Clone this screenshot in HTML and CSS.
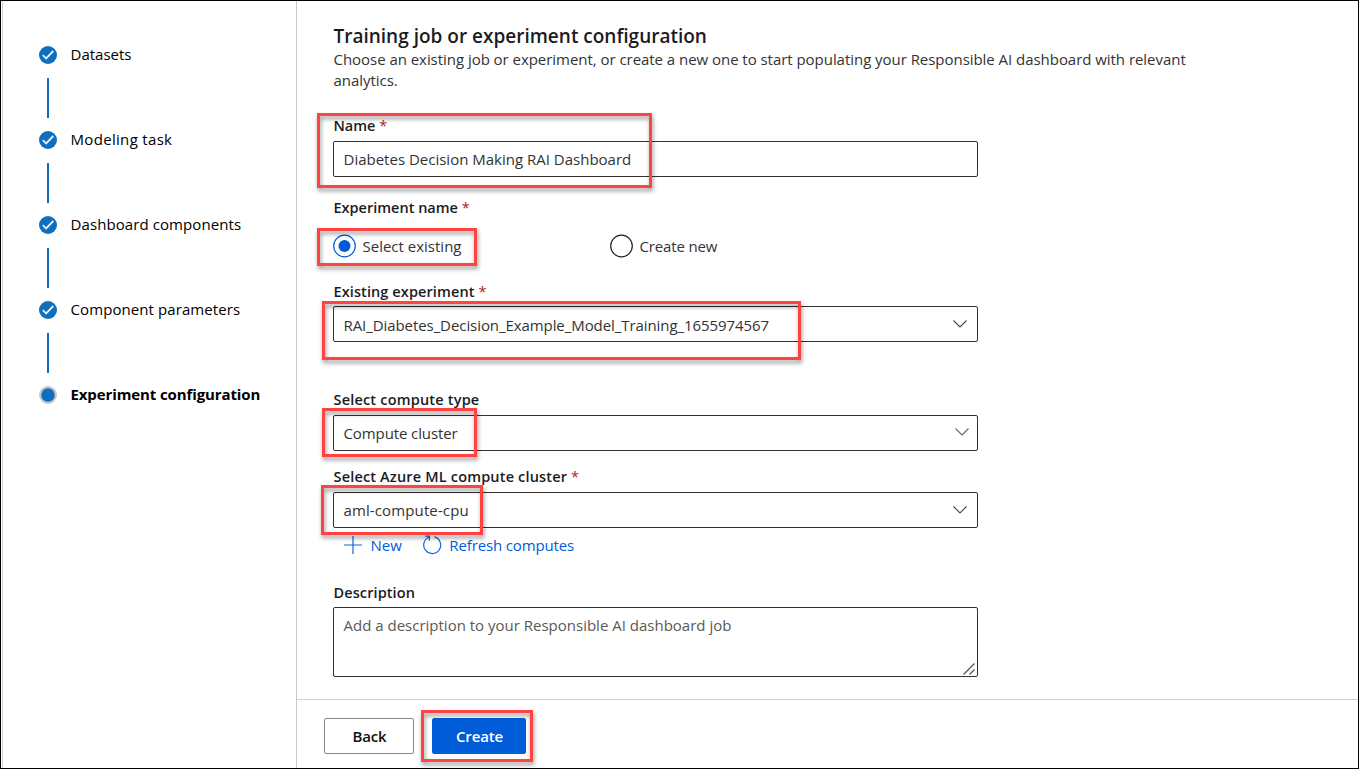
FILE: index.html
```html
<!DOCTYPE html>
<html lang="en">
<head>
<meta charset="utf-8">
<title>Training job or experiment configuration</title>
<link rel="stylesheet" href="styles.css">
</head>
<body>
<div class="window">
  <nav class="steps">
    <div class="step"><svg class="dot" viewBox="0 0 18 18"><circle cx="9" cy="9" r="9"/><path d="M3.800 9.200l3.300 3.200 7.200-7.400"/></svg><span>Datasets</span></div>
    <div class="step"><svg class="dot" viewBox="0 0 18 18"><circle cx="9" cy="9" r="9"/><path d="M3.800 9.200l3.300 3.200 7.200-7.400"/></svg><span class="s-model">Modeling task</span></div>
    <div class="step"><svg class="dot" viewBox="0 0 18 18"><circle cx="9" cy="9" r="9"/><path d="M3.800 9.200l3.300 3.200 7.200-7.400"/></svg><span class="s-dash">Dashboard components</span></div>
    <div class="step"><svg class="dot" viewBox="0 0 18 18"><circle cx="9" cy="9" r="9"/><path d="M3.800 9.200l3.300 3.200 7.200-7.400"/></svg><span class="s-dash">Component parameters</span></div>
    <div class="step current"><svg class="dot" viewBox="0 0 18 18"><circle class="ring" cx="9" cy="9" r="9"/><circle cx="9" cy="9" r="6.800"/></svg><span class="s-config">Experiment configuration</span></div>
  </nav>
  <main class="panel">
    <form class="form">
      <h1><span>Training job or experiment configuration</span></h1>
      <p class="intro"><span>Choose an existing job or experiment, or create a new one to start populating your Responsible AI dashboard with relevant</span><br><span>analytics.</span></p>

      <label class="label l-name"><span>Name</span> <i>*</i></label>
      <div class="field"><span>Diabetes Decision Making RAI Dashboard</span></div>

      <label class="label l-exp"><span>Experiment name</span> <i>*</i></label>
      <div class="radios">
        <div class="radio on"><svg viewBox="0 0 24 24"><circle cx="11.500" cy="12" r="10.800"/><circle class="fill" cx="11.500" cy="12" r="6"/></svg><span>Select existing</span></div>
        <div class="radio"><svg viewBox="0 0 24 24"><circle cx="11.500" cy="12" r="10.800"/></svg><span class="v-new">Create new</span></div>
      </div>

      <label class="label l-existing"><span>Existing experiment</span> <i>*</i></label>
      <div class="field"><span class="v-rai">RAI_Diabetes_Decision_Example_Model_Training_1655974567</span><svg class="chev" viewBox="0 0 14 8"><path d="M.5.5L7 7 13.500.5"/></svg></div>

      <label class="label l-type"><span>Select compute type</span></label>
      <div class="field native"><span class="v-type">Compute cluster</span><svg class="chev" viewBox="0 0 14 8"><path d="M.5.5L7 7 13.500.5"/></svg></div>

      <label class="label l-cluster"><span>Select Azure ML compute cluster</span> <i>*</i></label>
      <div class="field"><span class="v-aml">aml-compute-cpu</span><svg class="chev" viewBox="0 0 14 8"><path d="M.5.5L7 7 13.500.5"/></svg></div>

      <div class="actions">
        <svg class="plus" viewBox="0 0 18 18"><path d="M9 0v18M0 9h18"/></svg><span>New</span>
        <svg class="refresh" viewBox="0 0 20 20"><path d="M12.500 1.900A8.500 8.500 0 1 1 7 2.200M3 1.200H7.400V5.600"/></svg><span class="a-ref">Refresh computes</span>
      </div>

      <label class="label l-desc"><span>Description</span></label>
      <div class="area"><span>Add a description to your Responsible AI dashboard job</span><svg class="grip" viewBox="0 0 12 12"><path d="M.5 11.500L11.500.5M6.500 11.500l5-5"/></svg></div>
    </form>
    <footer class="footer">
      <div class="btn"><span>Back</span></div>
      <div class="btn primary"><span>Create</span></div>
    </footer>
  </main>
</div>
<div class="mark m-name"></div>
<div class="mark m-radio"></div>
<div class="mark m-existing"></div>
<div class="mark m-type"></div>
<div class="mark m-cluster"></div>
<div class="mark m-create"></div>
</body>
</html>
```
FILE: styles.css
```css
* { box-sizing: border-box; }
body {
  margin: 0;
  width: 1359px;
  height: 769px;
  overflow: hidden;
  position: relative;
  background: #fff;
  color: #1b1b1f;
  font: 15px/20px "Open Sans", "Noto Sans", sans-serif;
}
span { white-space: nowrap; }
svg { flex: none; display: block; }
.window {
  display: flex;
  width: 1359px;
  height: 769px;
  border: 1px solid #000;
}

/* Wizard steps */
.steps {
  flex: none;
  margin-left: 1px;
  width: 295px;
  border-left: 1px solid #d2d0ce;
  border-right: 1px solid #c8c8c8;
  padding: 45px 0 0 36px;
  color: #000;
}
.step {
  height: 85px;
  display: grid;
  grid-template-columns: 18px 1fr;
  grid-template-rows: 18px 1fr;
  column-gap: 13.5px;
  align-items: center;
}
.step span { margin-top: -3px; }
.step:not(.current)::after {
  content: "";
  width: 2px;
  height: 40px;
  background: #0f6cbd;
  justify-self: center;
  align-self: start;
  margin-top: 14px;
}
.dot { width: 18px; height: 18px; fill: #106ebe; }
.dot path { fill: none; stroke: #e4f1fc; stroke-width: 1.8; }
.dot .ring { fill: #c8c8c8; }
.current { font-weight: 700; }
.s-model { letter-spacing: .32px; }
.s-dash { letter-spacing: .09px; }
.s-config { letter-spacing: -.11px; }

/* Form */
.panel { flex: 1; display: flex; flex-direction: column; }
.form { height: 698px; flex: none; padding: 23px 0 0 36px; }
h1 { margin: 0; padding-left: .5px; font-size: 19px; line-height: 24px; font-weight: 600; }
.intro { margin: 1px 0 25px; padding-left: .5px; line-height: 21px; color: #333; height: 42px; letter-spacing: -.041px; }
.label { display: block; height: 20px; margin-bottom: 5px; padding-left: .5px; font-weight: 600; font-size: 14.5px; }
.label i { font-style: normal; font-weight: 400; color: #a4262c; }
.field {
  width: 645px;
  height: 36px;
  border: 1px solid #323130;
  border-radius: 2px;
  padding: 0 10px 0 9.5px;
  display: flex;
  align-items: center;
  justify-content: space-between;
  color: #333;
}
.chev { width: 14px; height: 8px; fill: none; stroke: #444; stroke-width: 1.1; }
.native .chev { margin: -2px -2px 0 0; stroke: #666; }
.v-rai { letter-spacing: -.075px; padding-top: 1px; }
.v-type { letter-spacing: -.1px; }
.v-aml { letter-spacing: .12px; }
.l-exp { margin-top: 21px; }
.radios { display: flex; height: 24px; margin-top: 16px; color: #333; }
.radio { width: 277px; display: flex; align-items: center; gap: 6px; }
.radio svg { width: 24px; height: 24px; margin-left: -.5px; fill: none; stroke: #222; stroke-width: 1.2; }
.radio.on svg { stroke: #015cda; }
.radio .fill { fill: #015cda; stroke: none; }
.v-new { letter-spacing: -.15px; }
.l-existing { margin-top: 24px; margin-bottom: 4px; letter-spacing: .1px; }
.l-type { margin-top: 48px; letter-spacing: .19px; }
.l-cluster { margin-top: 16px; letter-spacing: .17px; }
.actions { display: flex; align-items: center; height: 20px; margin-top: 7px; padding-left: 10.5px; color: #015cda; }
.actions svg { fill: none; stroke: #1567dc; stroke-width: 1.2; }
.a-ref { letter-spacing: -.14px; }
.plus { width: 18px; height: 18px; margin-right: 9px; }
.refresh { width: 20px; height: 20px; margin: 0 7.5px 0 20px; }
.l-desc { margin-top: 28px; margin-bottom: 4px; letter-spacing: .1px; }
.area {
  width: 645px;
  height: 70px;
  border: 1px solid #323130;
  border-radius: 2px;
  padding: 7px 2px 1px 9.5px;
  display: flex;
  justify-content: space-between;
  color: #5a5957;
}
.grip { width: 12px; height: 12px; align-self: flex-end; fill: none; stroke: #555; stroke-width: 1.3; }

/* Footer */
.footer { flex: 1; border-top: 1px solid #d2d0ce; padding: 18px 0 0 27px; display: flex; gap: 18px; }
.btn {
  width: 90px;
  height: 36px;
  border: 1px solid #8a8886;
  border-radius: 2px;
  display: flex;
  align-items: center;
  justify-content: center;
  font-weight: 600;
  color: #111;
  letter-spacing: -.15px;
  padding-left: 1px;
}
.primary { width: 94px; background: #015cda; border-color: #015cda; color: #fff; }

/* Callout rectangles over the form */
.mark { position: absolute; border: 3px solid #ff4343; filter: drop-shadow(1px 3px 2px rgba(0,0,0,.42)); }
.m-name { left: 317px; top: 113px; width: 335px; height: 75px; }
.m-radio { left: 317px; top: 228px; width: 160px; height: 38px; }
.m-existing { left: 322px; top: 301px; width: 479px; height: 59px; }
.m-type { left: 322px; top: 408px; width: 155px; height: 49px; }
.m-cluster { left: 321px; top: 485px; width: 162px; height: 50px; }
.m-create { left: 421px; top: 710px; width: 112px; height: 52px; }
```
